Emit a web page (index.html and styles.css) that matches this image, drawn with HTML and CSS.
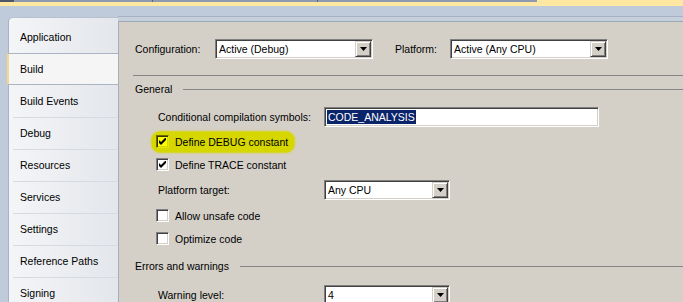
FILE: index.html
```html
<!DOCTYPE html>
<html lang="en">
<head>
    <meta charset="UTF-8">
    <meta name="viewport" content="width=device-width, initial-scale=1.0">
    <title>Project Properties - Build</title>
    <link rel="stylesheet" href="styles.css">
</head>
<body>
    <div class="topbar">
        <span class="tb tb-dark"></span>
        <span class="tb tb-1"></span>
        <span class="tb tb-2"></span>
        <span class="tb tb-3"></span>
    </div>

    <div class="frame">
        <ul class="tabs">
            <li>Application</li>
            <li class="active">Build</li>
            <li>Build Events</li>
            <li>Debug</li>
            <li>Resources</li>
            <li>Services</li>
            <li>Settings</li>
            <li>Reference Paths</li>
            <li>Signing</li>
        </ul>

        <div class="main">
            <div class="content">
                <div class="row config-row">
                    <span class="lbl lbl-config">Configuration:</span>
                    <div class="select w158">
                        <span class="value">Active (Debug)</span>
                        <span class="drop"><svg width="7" height="4" viewBox="0 0 7 4"><polygon points="0,0 7,0 3.5,4" fill="#000"/></svg></span>
                    </div>
                    <span class="lbl lbl-platform">Platform:</span>
                    <div class="select w158">
                        <span class="value">Active (Any CPU)</span>
                        <span class="drop"><svg width="7" height="4" viewBox="0 0 7 4"><polygon points="0,0 7,0 3.5,4" fill="#000"/></svg></span>
                    </div>
                </div>

                <div class="rule"></div>

                <div class="group-head">
                    <span>General</span>
                    <span class="group-line"></span>
                </div>

                <div class="row field-row">
                    <span class="lbl">Conditional compilation symbols:</span>
                    <div class="textbox w275"><span class="selected">CODE_ANALYSIS</span></div>
                </div>

                <div class="check-row first-check">
                    <span class="check-item marked">
                        <span class="box"><svg width="7" height="7" viewBox="0 0 7 7"><polygon points="0,2 2,4 7,-1 7,2 2,7 0,5" fill="#000"/></svg></span>
                        Define DEBUG constant
                    </span>
                </div>
                <div class="check-row">
                    <span class="check-item">
                        <span class="box"><svg width="7" height="7" viewBox="0 0 7 7"><polygon points="0,2 2,4 7,-1 7,2 2,7 0,5" fill="#000"/></svg></span>
                        Define TRACE constant
                    </span>
                </div>

                <div class="row field-row platform-row">
                    <span class="lbl">Platform target:</span>
                    <div class="select w126">
                        <span class="value">Any CPU</span>
                        <span class="drop"><svg width="7" height="4" viewBox="0 0 7 4"><polygon points="0,0 7,0 3.5,4" fill="#000"/></svg></span>
                    </div>
                </div>

                <div class="check-row after-select">
                    <span class="check-item"><span class="box"></span>Allow unsafe code</span>
                </div>
                <div class="check-row">
                    <span class="check-item"><span class="box"></span>Optimize code</span>
                </div>

                <div class="group-head errors-head">
                    <span>Errors and warnings</span>
                    <span class="group-line"></span>
                </div>

                <div class="row field-row warning-row">
                    <span class="lbl">Warning level:</span>
                    <div class="select w126">
                        <span class="value">4</span>
                        <span class="drop"><svg width="7" height="4" viewBox="0 0 7 4"><polygon points="0,0 7,0 3.5,4" fill="#000"/></svg></span>
                    </div>
                </div>
            </div>
        </div>
    </div>
</body>
</html>
```

FILE: styles.css
```css
body {
    margin: 0;
    height: 302px;
    overflow: hidden;
    background-color: #bfcbdb;
    font-family: "Liberation Sans", Arial, sans-serif;
    font-size: 10.5px;
    color: #000;
}

/* taskbar strip along the top */
.topbar {
    height: 6px;
    background-color: #ffe8a2;
    display: flex;
    align-items: flex-start;
}
.tb {
    height: 2px;
    background-color: #8d9aaf;
    border-right: 1px solid #5d6678;
}
.tb-dark {
    width: 14px;
    background-color: #4f5666;
    border-right: none;
}
.tb-1 { width: 138px; }
.tb-2 { width: 164px; }
.tb-3 { width: 219px; border-right: none; }

.frame {
    display: flex;
    height: 296px;
    box-sizing: border-box;
    padding: 10px 0 0 8px;
}

/* left tab list */
.tabs {
    list-style: none;
    margin: 1px 0 0;
    padding: 3px 0 0;
    width: 110px;
    box-sizing: border-box;
    border-left: 1px solid #a7b3c4;
    border-top: 1px solid #b6c1d0;
    border-top-left-radius: 5px;
    background: linear-gradient(to right, #f4f5f7, #e3e6eb);
}
.tabs li {
    height: 32px;
    box-sizing: border-box;
    display: flex;
    align-items: center;
    padding-left: 11px;
    background: linear-gradient(#d6dbe2, #d6dbe2) no-repeat 4px 0 / 100% 1px;
}
.tabs li:first-child {
    background: none;
}
.tabs li.active {
    margin-left: -2px;
    border-left: 2px solid #f3d68f;
    border-top: 1px solid #aab4c3;
    border-bottom: 1px solid #aab4c3;
    background: #f5f5f5;
}
.tabs li.active + li {
    background: none;
}

/* property page */
.main {
    flex: 1;
    display: flex;
    flex-direction: column;
    border-top: 1px solid #a6b2c4;
    padding-top: 4px;
    background-color: #c6d0dd;
}
.content {
    flex: 1;
    background-color: #d4d0c8;
    border-top: 1px solid #9ca7b8;
    border-left: 1px solid #a4aebd;
    padding-left: 16px;
}

.row {
    display: flex;
    align-items: center;
}
.config-row {
    margin-top: 17px;
}
.lbl-config { width: 80px; }
.lbl-platform { width: 55px; margin-left: 22px; }

.select, .textbox {
    height: 20px;
    box-sizing: border-box;
    border: 1px solid;
    border-color: #808080 #fff #fff #808080;
    box-shadow: inset 1px 1px #404040, inset -1px -1px #d4d0c8;
    background-color: #fff;
    display: flex;
    align-items: center;
    padding: 1px;
}
.value {
    flex: 1;
    padding-left: 2px;
}
.drop {
    width: 16px;
    height: 16px;
    box-sizing: border-box;
    background-color: #d4d0c8;
    border: 1px solid;
    border-color: #d4d0c8 #404040 #404040 #d4d0c8;
    box-shadow: inset 1px 1px #fff, inset -1px -1px #808080;
    display: flex;
    align-items: center;
    justify-content: center;
}
.w158 { width: 158px; }
.w126 { width: 126px; }
.w275 { width: 275px; }

.selected {
    margin-left: 1px;
    padding: 1px 1px;
    background-color: #0a246a;
    color: #fff;
}

.rule {
    height: 1px;
    margin: 16px 0 0 -2px;
    background-color: #868686;
}

.group-head {
    display: flex;
    align-items: center;
    height: 14px;
    margin-top: 6px;
}
.group-line {
    flex: 1;
    height: 1px;
    margin-left: 11px;
    background-color: #868686;
}
.errors-head {
    margin-top: 9px;
}

.field-row {
    margin-top: 11px;
    padding-left: 23px;
}
.field-row .lbl {
    width: 166px;
}
.platform-row {
    margin-top: 4px;
}
.warning-row {
    margin-top: 12px;
}

.check-row {
    height: 23px;
    display: flex;
    align-items: center;
    padding-left: 17px;
}
.first-check {
    margin-top: 3px;
}
.after-select {
    margin-top: 4px;
}
.check-item {
    display: inline-flex;
    align-items: center;
    gap: 6px;
    height: 20px;
    padding: 0 6px 0 4px;
    border-radius: 8px;
}
.check-item.marked {
    background-color: #d6d600;
    box-shadow: 0 0 2px 1px #d6d600;
}
.box {
    width: 13px;
    height: 13px;
    box-sizing: border-box;
    border: 1px solid;
    border-color: #808080 #fff #fff #808080;
    box-shadow: inset 1px 1px #404040, inset -1px -1px #d4d0c8;
    background-color: #fff;
    display: flex;
    align-items: center;
    justify-content: center;
}
.marked .box {
    background-color: #ffff00;
    border-color: #6b6b00 #e6e600 #e6e600 #6b6b00;
    box-shadow: inset 1px 1px #363600, inset -1px -1px #d6d600;
}
```
